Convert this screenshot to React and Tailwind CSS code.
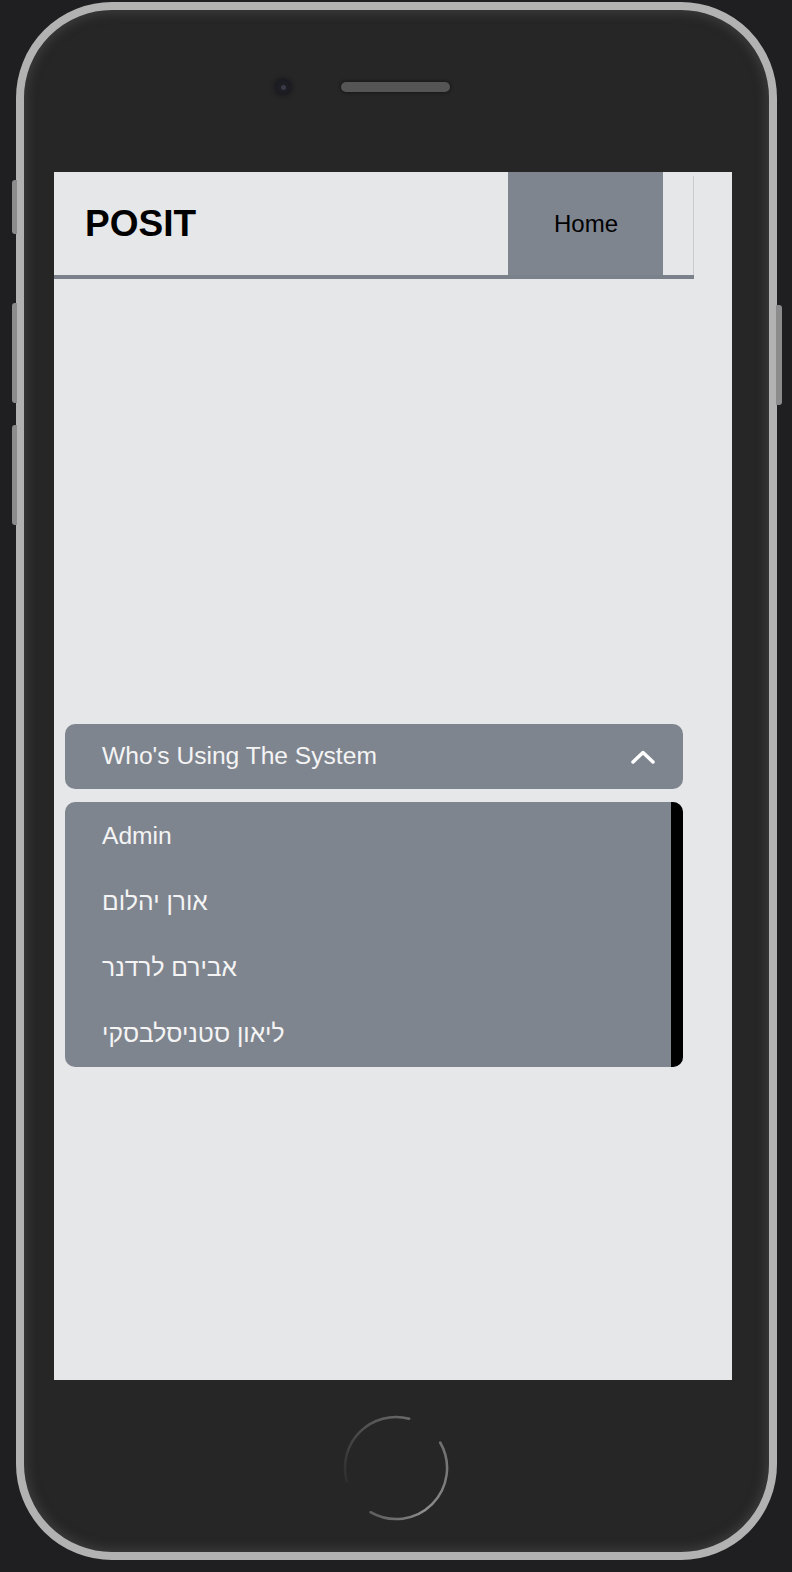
import { useState } from 'react'

const users = ['Admin', 'אורן יהלום', 'אבירם לרדנר', 'ליאון סטניסלבסקי']

// כפתור הבית של המכשיר
function HomeButton() {
  return (
    <svg width="106" height="106" viewBox="0 0 106 106">
      <defs>
        <linearGradient id="ringA" x1="0" y1="1" x2="1" y2="0">
          <stop offset="0%" stopColor="#2e2e2e" />
          <stop offset="100%" stopColor="#6a6a6a" />
        </linearGradient>
        <linearGradient id="ringB" x1="1" y1="0" x2="0" y2="1">
          <stop offset="0%" stopColor="#6e6e6e" />
          <stop offset="60%" stopColor="#8e8e8e" />
          <stop offset="100%" stopColor="#5a5a5a" />
        </linearGradient>
      </defs>
      <path d="M3.7 66.2 A51 51 0 0 1 66.2 3.7" fill="none" stroke="url(#ringA)" strokeWidth="2.5" strokeLinecap="round" />
      <path d="M97.2 27.5 A51 51 0 0 1 27.5 97.2" fill="none" stroke="url(#ringB)" strokeWidth="2.5" strokeLinecap="round" />
    </svg>
  )
}

export default function App() {
  const [open, setOpen] = useState(true)

  return (
    <div
      className="relative w-[792px] h-[1572px] bg-[#1f1f21] pt-[2px] pl-[16px] overflow-hidden"
      style={{ fontFamily: '"Liberation Sans", Arial, "Noto Sans", sans-serif' }}
    >
      {/* side buttons */}
      <div className="absolute left-[12px] top-[180px] w-[5px] h-[54px] rounded-l-[3px] bg-[#8c8c8c]" />
      <div className="absolute left-[12px] top-[303px] w-[5px] h-[100px] rounded-l-[3px] bg-[#8c8c8c]" />
      <div className="absolute left-[12px] top-[425px] w-[5px] h-[100px] rounded-l-[3px] bg-[#8c8c8c]" />
      <div className="absolute left-[776px] top-[305px] w-[6px] h-[100px] rounded-r-[3px] bg-[#8c8c8c]" />

      {/* phone body */}
      <div className="w-[761px] h-[1558px] rounded-[96px] border-[8px] border-[#b2b2b2] bg-[#262626] shadow-[inset_0_0_10px_4px_rgba(60,60,60,0.9)]">
        {/* camera + speaker */}
        <div className="flex items-center h-[152px] pt-[2px]">
          <div className="ml-[252px] w-[14px] h-[14px] rounded-full bg-[#1d1d24] flex items-center justify-center shadow-[0_0_4px_2px_rgba(20,20,30,0.8)]">
            <div className="w-[5px] h-[5px] rounded-full bg-[#3a3a48]" />
          </div>
          <div className="ml-[51px] w-[109px] h-[10px] rounded-full bg-[#555555] shadow-[0_0_3px_1px_rgba(20,20,20,0.8)]" />
        </div>

        {/* screen */}
        <div className="ml-[30px] mt-[10px] w-[678px] h-[1208px] bg-[#e6e7e9]">
          {/* header */}
          <div className="flex w-[640px] h-[107px] border-b-4 border-[#7a818b]">
            <div className="flex-1 flex items-center pl-[31px] text-[37px] font-bold text-black">POSIT</div>
            <div className="w-[155px] bg-[#7f858f] flex items-center justify-center text-[24px] text-black pl-[1px]">
              Home
            </div>
            <div className="w-[30px]" />
            <div className="w-px mt-[4px] bg-[#c9cbce]" />
          </div>

          {/* accordion */}
          <div className="ml-[11px] mt-[445px] w-[618px]">
            <button
              onClick={() => setOpen(!open)}
              className="w-full h-[65px] rounded-[10px] bg-[#7f858f] flex items-center justify-between pl-[37px] pr-[27px] text-[24.6px] text-[#f4f4f4]"
            >
              <span>Who's Using The System</span>
              <svg width="26" height="16" viewBox="0 0 26 16">
                <polyline
                  points="3,13 13,3.5 23,13"
                  fill="none"
                  stroke="#ffffff"
                  strokeWidth="3.5"
                  strokeLinecap="round"
                  strokeLinejoin="round"
                />
              </svg>
            </button>

            {open && (
              <div className="mt-[13px] h-[265px] rounded-[10px] overflow-hidden flex bg-[#7f858f]">
                <div className="flex-1 pt-px">
                  {users.map((u) => (
                    <div key={u} className="h-[66px] flex items-center pl-[37px] text-[24.6px] text-[#f4f4f4]">
                      <span>{u}</span>
                    </div>
                  ))}
                </div>
                <div className="w-[12px] bg-black" />
              </div>
            )}
          </div>
        </div>

        <div className="mt-[35px] ml-[319px] w-[106px] h-[106px]">
          <HomeButton />
        </div>
      </div>
    </div>
  )
}
